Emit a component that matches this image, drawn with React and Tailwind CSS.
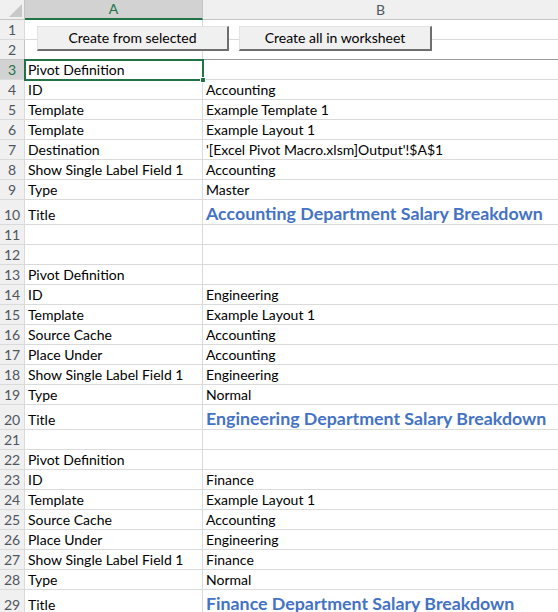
import React from "react";

const rows = [
  { n: 1, a: "", b: "" },
  { n: 2, a: "", b: "", freeze: true },
  { n: 3, a: "Pivot Definition", b: "", sel: true },
  { n: 4, a: "ID", b: "Accounting" },
  { n: 5, a: "Template", b: "Example Template 1" },
  { n: 6, a: "Template", b: "Example Layout 1" },
  { n: 7, a: "Destination", b: "'[Excel Pivot Macro.xlsm]Output'!$A$1" },
  { n: 8, a: "Show Single Label Field 1", b: "Accounting" },
  { n: 9, a: "Type", b: "Master" },
  { n: 10, a: "Title", b: "Accounting Department Salary Breakdown", title: true },
  { n: 11, a: "", b: "" },
  { n: 12, a: "", b: "" },
  { n: 13, a: "Pivot Definition", b: "" },
  { n: 14, a: "ID", b: "Engineering" },
  { n: 15, a: "Template", b: "Example Layout 1" },
  { n: 16, a: "Source Cache", b: "Accounting" },
  { n: 17, a: "Place Under", b: "Accounting" },
  { n: 18, a: "Show Single Label Field 1", b: "Engineering" },
  { n: 19, a: "Type", b: "Normal" },
  { n: 20, a: "Title", b: "Engineering Department Salary Breakdown", title: true },
  { n: 21, a: "", b: "" },
  { n: 22, a: "Pivot Definition", b: "" },
  { n: 23, a: "ID", b: "Finance" },
  { n: 24, a: "Template", b: "Example Layout 1" },
  { n: 25, a: "Source Cache", b: "Accounting" },
  { n: 26, a: "Place Under", b: "Engineering" },
  { n: 27, a: "Show Single Label Field 1", b: "Finance" },
  { n: 28, a: "Type", b: "Normal" },
  { n: 29, a: "Title", b: "Finance Department Salary Breakdown", title: true },
];

function Row({ r }) {
  const h = r.title ? "h-[25px]" : "h-[20px]";
  const bb = r.freeze ? "border-b border-[#9b9b9b]" : "border-b border-[#dadada]";
  return (
    <div className={`flex ${h}`}>
      <div
        className={`w-[25px] shrink-0 flex items-end justify-center pb-[1px] text-[14px] leading-[16px] border-r border-[#c4c4c4] ${
          r.freeze ? "border-b border-[#9b9b9b]" : "border-b border-[#dadada]"
        } ${r.sel ? "bg-[#d2d2d2] text-[#217346]" : "bg-[#f0f0f0] text-[#4f5660]"}`}
      >
        {r.n}
      </div>
      <div className={`w-[178px] shrink-0 flex items-end pl-[3px] pb-[1px] text-[14px] leading-[16px] text-black border-r border-[#dadada] ${bb} whitespace-nowrap`}>
        {r.a}
      </div>
      <div
        className={`flex-1 flex items-end pl-[3px] whitespace-nowrap ${bb} ${
          r.title
            ? "text-[17.8px] leading-[20px] font-bold text-[#4472c4] pb-[1px]"
            : "text-[14px] leading-[16px] text-black pb-[1px]"
        }`}
      >
        {r.b}
      </div>
    </div>
  );
}

function Btn({ children, className }) {
  return (
    <div
      className={`absolute h-[25px] flex items-center justify-center bg-[#f0f0f0] text-[14px] leading-[16px] text-black border-t border-l border-[#e3e3e3] border-r-2 border-b-2 border-r-[#6e6e6e] border-b-[#6e6e6e] ${className}`}
    >
      {children}
    </div>
  );
}

export default function App() {
  return (
    <div
      className="relative w-[558px] h-[612px] overflow-hidden bg-white"
      style={{ fontFamily: "Lato, 'Noto Sans', sans-serif" }}
    >
      <div className="flex h-[20px]">
        <div className="relative w-[25px] shrink-0 bg-[#f0f0f0] border-r border-b border-[#c4c4c4]">
          <div className="absolute right-[2px] bottom-[2px] w-0 h-0 border-l-[13px] border-l-transparent border-b-[13px] border-b-[#c8c8c8]" />
        </div>
        <div className="w-[178px] shrink-0 flex items-center justify-center bg-[#d2d2d2] text-[#217346] text-[14px] leading-[16px] border-r border-[#c4c4c4] border-b-2 border-b-[#217346]">
          A
        </div>
        <div className="flex-1 flex items-center justify-center bg-[#f0f0f0] text-[#4f5660] text-[14px] leading-[16px] border-b border-[#c4c4c4]">
          B
        </div>
      </div>
      {rows.map((r) => (
        <Row key={r.n} r={r} />
      ))}

      <Btn className="left-[37px] top-[26px] w-[192px]">Create from selected</Btn>
      <Btn className="left-[239px] top-[26px] w-[193px]">Create all in worksheet</Btn>

      <div className="absolute left-[24px] top-[59px] w-[180px] h-[22px] border-2 border-[#217346] pointer-events-none" />
      <div className="absolute left-[200px] top-[77px] w-[6px] h-[6px] bg-[#217346] border border-white" />
    </div>
  );
}
